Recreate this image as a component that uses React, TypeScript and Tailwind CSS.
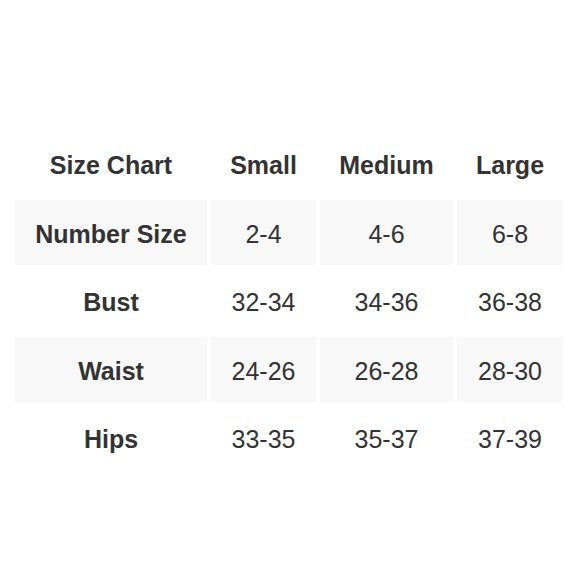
export default function App() {
  const header = ["Size Chart", "Small", "Medium", "Large"];
  const rows = [
    ["Number Size", "2-4", "4-6", "6-8"],
    ["Bust", "32-34", "34-36", "36-38"],
    ["Waist", "24-26", "26-28", "28-30"],
    ["Hips", "33-35", "35-37", "37-39"],
  ];
  return (
    <div
      className="w-[580px] h-[580px] bg-white text-[#333333] text-[25px]"
      style={{ fontFamily: '"Liberation Sans", Arial, sans-serif' }}
    >
      <div className="pt-[131.5px] pl-[15px]">
        <div className="grid grid-cols-[192px_105px_133px_106px] gap-x-[4px] gap-y-[4px] auto-rows-[64.5px]">
          {header.map((h) => (
            <div key={h} className="flex items-center justify-center pt-[4px] font-bold">
              {h}
            </div>
          ))}
          {rows.map((r, i) =>
            r.map((c, j) => (
              <div
                key={`${i}-${j}`}
                className={`flex items-center justify-center pt-[4px] ${j === 0 ? "font-bold" : ""} ${
                  i % 2 === 0 ? "bg-[#f8f8f8]" : ""
                }`}
              >
                {c}
              </div>
            ))
          )}
        </div>
      </div>
    </div>
  );
}
